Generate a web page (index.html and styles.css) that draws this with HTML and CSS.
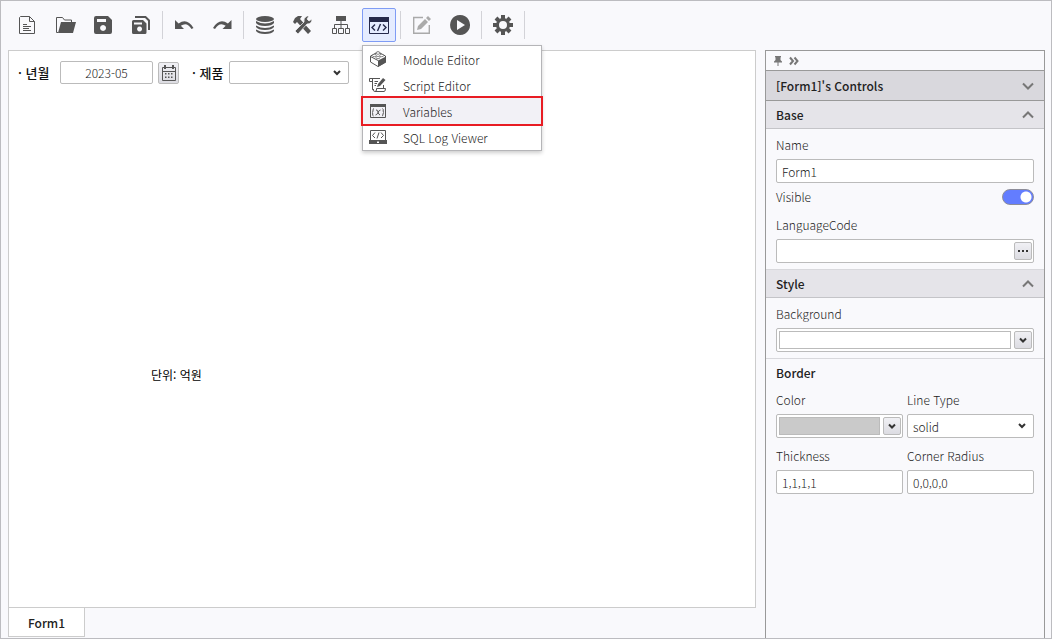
FILE: index.html
```html
<!DOCTYPE html>
<html lang="ko">
  <head>
    <meta charset="UTF-8" />
    <meta name="viewport" content="width=device-width, initial-scale=1.0" />
    <title>Form1</title>
    <link rel="stylesheet" href="styles.css">
  </head>
  <body>
    <div class="app">
      <header class="toolbar">
        <button class="tool" aria-label="New">
          <svg viewBox="0 0 20 20"><path class="line" d="M3.5 1.5H12.500L17.500 6.500V18.500H2.500V2.500Z"/><path class="line" d="M12.500 1.500V6.500H17.500"/><path class="line" d="M6 9.500H10M6 11.500H14M6 13.500H12M6 15.500H14"/></svg>
        </button>
        <button class="tool" aria-label="Open">
          <svg viewBox="0 0 20 20"><path class="line" d="M3 17.500H1.500V2.500H7.500L9.500 5H16.500V8"/><path d="M6 7H21L18 18H3Z"/></svg>
        </button>
        <button class="tool" aria-label="Save">
          <svg viewBox="0 0 20 20"><path fill-rule="evenodd" d="M3 1H15L19 5V17Q19 19 17 19H3Q1 19 1 17V3Q1 1 3 1ZM4 4V7H13V4ZM10 10a3 3 0 1 0 .1 0Z"/></svg>
        </button>
        <button class="tool" aria-label="Save all">
          <svg viewBox="0 0 20 20"><path fill-rule="evenodd" d="M2.500 5H12L15.500 8.500V17.500Q15.500 19 14 19H2.500Q1 19 1 17.500V6.500Q1 5 2.500 5ZM3 7.500V9.500H11V7.500ZM8.500 11.500a2.500 2.500 0 1 0 .1 0Z"/><path class="bold" d="M4 2H14.500L18 5.500V15"/></svg>
        </button>
        <span class="sep"></span>
        <button class="tool" aria-label="Undo">
          <svg viewBox="0 0 20 20"><path d="M1 5V14H10L6.800 10.800Q13 6.500 17.500 14L19.500 13Q13 2.500 4.600 8.600Z"/></svg>
        </button>
        <button class="tool" aria-label="Redo">
          <svg viewBox="0 0 20 20"><path d="M19.500 5V14H10.500L13.700 10.800Q7.500 6.500 3 14L1 13Q7.500 2.500 15.900 8.600Z"/></svg>
        </button>
        <span class="sep"></span>
        <button class="tool" aria-label="Data">
          <svg viewBox="0 0 20 20"><ellipse cx="10" cy="4" rx="9" ry="3"/><path d="M1 6Q10 11 19 6V8Q17 11 10 11T1 8ZM1 10.500Q10 15.500 19 10.500V12Q17 15 10 15T1 12ZM1 14.500Q10 19.500 19 14.500V16Q17 19 10 19T1 16Z"/></svg>
        </button>
        <button class="tool" aria-label="Tools">
          <svg viewBox="0 0 20 20"><path d="M0 7L2 3L5 1H9L7 4L18 16L15 19L4 7L2 9Z"/><path d="M2 16L11 7Q10 3 14 1H16L14 4L16 6L19 4Q19 9 14 9L5 19Z" stroke="#f9f9fc" stroke-width=".7"/></svg>
        </button>
        <button class="tool" aria-label="Structure">
          <svg viewBox="0 0 20 20"><path d="M5 1H15V6H5Z"/><path class="line" d="M10 6V13M3.500 13V9.500H16.500V13M1.500 13.500H5.500V18.500H1.500ZM7.500 13.500H12.500V18.500H7.500ZM14.500 13.500H18.500V18.500H14.500Z"/></svg>
        </button>
        <div class="dropdown">
          <button class="tool active" aria-label="Code" aria-expanded="true">
            <svg viewBox="0 0 20 20"><path class="line" d="M.5 2.500H19.500V18.500H.5Z"/><path d="M0 2H20V7H0Z"/><path class="mid" d="M6 9.500L3 12.500L6 15.500M14 9.500L17 12.500L14 15.500M11.500 9L8.500 16"/></svg>
          </button>
          <div class="menu">
            <button class="menu-item">
              <svg viewBox="0 0 18 18"><path class="line" d="M1.500 6L9 2L16.500 6V12L9 16.500L1.500 12ZM1.500 6.500L9 10.500"/><path d="M9 10.500L17 6.500V12.500L9 17Z"/><ellipse class="thin" cx="9" cy="3" rx="2" ry="1.300"/><ellipse class="thin" cx="5.300" cy="5.500" rx="2" ry="1.200"/><ellipse class="thin" cx="12.700" cy="5.500" rx="2" ry="1.200"/><ellipse class="thin" cx="9" cy="7.500" rx="2" ry="1.200"/></svg>
              Module Editor
            </button>
            <button class="menu-item">
              <svg viewBox="0 0 18 18"><path class="line" d="M3.500 5.500H.5V2.500H11M3.500 2.500V13.500H5M14.500 9V12M6 15.500H15Q16.500 15.500 16.500 12.500H7.500V14Q7 15.500 6 15.500Q4 15.500 4 13M5.500 5.500H9M5.500 7.500H8M5.500 9.500H7"/><path d="M8 11L9 8L14 2L16.500 4L11 10Z"/></svg>
              Script Editor
            </button>
            <button class="menu-item selected">
              <svg viewBox="0 0 18 18"><path class="line" d="M1.500 2.500H16.500V15.500H1.500Z"/><path d="M1 2H17V5H1Z"/><path class="line" d="M5 6.500Q3.500 7 4 9Q4 10 3 10.500Q4 11 3.700 12Q3.500 14 4.500 14M13.500 6.500Q14.500 7 14.200 9Q14 10 15 10.500Q14 11 14 12Q14 14 13 14M7 8Q8.500 7.500 9 10T11 13M11.500 8Q10 8 9 10.500T6.500 13"/></svg>
              Variables
            </button>
            <button class="menu-item">
              <svg viewBox="0 0 18 18"><path class="line" d="M1.500 13V2.500H16.500V13M6 4.500L3.500 7.500L6 10M12 4.500L14.500 7.500L12 10M10 4.500L8 10.500"/><path fill-rule="evenodd" d="M0 12H18V16H0ZM8 13.500V15H10V13.500Z"/></svg>
              SQL Log Viewer
            </button>
          </div>
        </div>
        <span class="sep"></span>
        <button class="tool disabled" aria-label="Edit" disabled>
          <svg viewBox="0 0 20 20"><path class="mid" d="M11 2.500H1.700V18.300H17.300V10"/><path d="M5 15L6 11L13 4L16 7L9 14ZM14 3L16 1L19 4L17 6Z"/></svg>
        </button>
        <button class="tool" aria-label="Run">
          <svg viewBox="0 0 20 20"><path fill-rule="evenodd" d="M10 0a10 10 0 1 0 .1 0ZM7 5L15 10L7 15Z"/></svg>
        </button>
        <span class="sep"></span>
        <button class="tool" aria-label="Settings">
          <svg viewBox="0 0 20 20"><circle class="ring" cx="10" cy="10" r="5.500"/><path class="teeth" d="M10 0V4M10 16V20M0 10H4M16 10H20M3 3L5.500 5.500M14.500 14.500L17 17M17 3L14.500 5.500M5.500 14.500L3 17"/></svg>
        </button>
        <span class="sep"></span>
      </header>

      <div class="workspace">
        <main class="editor">
          <div class="canvas">
            <div class="filters">
              <label for="month">· 년월</label>
              <input id="month" class="month" type="text" value="2023-05" />
              <button class="icon-btn calendar" aria-label="Calendar">
                <svg viewBox="0 0 16 16"><path class="line" d="M1.500 2.500H14.500V15.500H1.500ZM2 6.500H14"/><path d="M3 0H5V4H3ZM11 0H13V4H11ZM4 8H5.500V9.500H4ZM7 8H8.500V9.500H7ZM10 8H11.500V9.500H10ZM4 11.500H5.500V13H4ZM7 11.500H8.500V13H7ZM10 11.500H11.500V13H10Z"/></svg>
              </button>
              <label for="product">· 제품</label>
              <select id="product" class="product"><option></option></select>
            </div>
            <span class="unit">단위: 억원</span>
          </div>
          <nav class="tabs"><button class="tab">Form1</button></nav>
        </main>

        <aside class="panel">
          <div class="panel-bar">
            <button class="plain" aria-label="Pin">
              <svg viewBox="0 0 10 10"><path d="M2 0H8V1L7.500 1.500V4L9 5.500V6.500H5.500V10H4.500V6.500H1V5.500L2.500 4V1.500L2 1Z"/></svg>
            </button>
            <button class="plain" aria-label="Collapse">
              <svg viewBox="0 0 10 10"><path class="bold" d="M1 1.500L4 5L1 8.500M5.500 1.500L8.500 5L5.500 8.500"/></svg>
            </button>
          </div>
          <button class="section controls">[Form1]'s Controls
            <svg viewBox="0 0 12 8"><path class="bold" d="M1 1.500L6 6.500L11 1.500"/></svg>
          </button>
          <button class="section">Base
            <svg viewBox="0 0 12 8"><path class="bold" d="M1 6.500L6 1.500L11 6.500"/></svg>
          </button>
          <div class="group">
            <label for="name">Name</label>
            <input id="name" class="field" type="text" value="Form1" />
            <div class="row">
              <label for="visible">Visible</label>
              <input id="visible" class="toggle" type="checkbox" checked />
            </div>
            <label for="lang">LanguageCode</label>
            <div class="field combo">
              <input id="lang" type="text" />
              <button class="icon-btn" aria-label="More">
                <svg viewBox="0 0 12 12"><path d="M1 5H3V7H1ZM5 5H7V7H5ZM9 5H11V7H9Z"/></svg>
              </button>
            </div>
          </div>
          <button class="section style">Style
            <svg viewBox="0 0 12 8"><path class="bold" d="M1 6.500L6 1.500L11 6.500"/></svg>
          </button>
          <div class="group">
            <label for="background">Background</label>
            <div class="field combo">
              <span class="swatch"></span>
              <button id="background" class="icon-btn">
                <svg viewBox="0 0 12 12"><path class="bold" d="M3 4.500L6 7.500L9 4.500"/></svg>
              </button>
            </div>
          </div>
          <div class="group border-group">
            <h3>Border</h3>
            <div class="grid">
              <div>
                <label for="color">Color</label>
                <div class="field combo">
                  <span class="swatch gray"></span>
                  <button id="color" class="icon-btn">
                    <svg viewBox="0 0 12 12"><path class="bold" d="M3 4.500L6 7.500L9 4.500"/></svg>
                  </button>
                </div>
              </div>
              <div>
                <label for="lineType">Line Type</label>
                <select id="lineType" class="field"><option>solid</option></select>
              </div>
              <div>
                <label for="thickness">Thickness</label>
                <input id="thickness" class="field" type="text" value="1,1,1,1" />
              </div>
              <div>
                <label for="radius">Corner Radius</label>
                <input id="radius" class="field" type="text" value="0,0,0,0" />
              </div>
            </div>
          </div>
        </aside>
      </div>
    </div>
  </body>
</html>
```

FILE: styles.css
```css
* {
  box-sizing: border-box;
}
body {
  margin: 0;
  color: #222;
}
body,
button,
input,
select {
  font-family: "Noto Sans CJK KR", sans-serif;
  font-size: 12px;
  font-weight: 300;
}
button {
  padding: 0;
  border: 0;
  background: none;
  color: inherit;
}
svg {
  display: block;
  flex: none;
  fill: #555;
  stroke: none;
  overflow: visible;
}
.line,
.thin,
.mid,
.bold,
.ring,
.teeth {
  fill: none;
  stroke: #555;
  stroke-width: 1;
}
.thin {
  fill: #fff;
  stroke-width: 0.7;
}
.mid {
  stroke-width: 1.4;
}
.bold {
  stroke-width: 2;
}
.ring {
  stroke-width: 3;
}
.teeth {
  stroke-width: 4;
}
.app {
  display: flex;
  flex-direction: column;
  min-height: 100vh;
  border: 1px solid #bcbcc0;
  background: #f9f9fc;
}

/* toolbar */
.toolbar {
  display: flex;
  align-items: center;
  gap: 4px;
  height: 49px;
  padding: 0 9px 1px;
}
.tool {
  display: flex;
  align-items: center;
  justify-content: center;
  width: 34px;
  height: 34px;
  border-radius: 2px;
}
.tool svg {
  width: 20px;
  height: 20px;
}
.tool.active {
  border: 1px solid #7f9cf5;
  background: #e5ecff;
}
.tool.active svg {
  fill: #25294a;
}
.tool.active .line,
.tool.active .mid {
  stroke: #25294a;
}
.tool.active .line,
.tool.active .mid,
.tool.disabled .mid {
  fill: none;
}
.tool.disabled svg {
  fill: #aaa;
}
.tool.disabled .mid {
  stroke: #aaa;
}
.sep {
  width: 1px;
  height: 28px;
  background: #d3d3d8;
}

/* dropdown menu */
.dropdown {
  position: relative;
}
.menu {
  position: absolute;
  z-index: 10;
  top: 37px;
  left: 0;
  width: 180px;
  border: 1px solid #b5b5b8;
  background: #fff;
  box-shadow: 0 2px 4px rgba(0, 0, 0, 0.2);
}
.menu-item {
  display: flex;
  align-items: center;
  gap: 16px;
  width: 100%;
  height: 26px;
  padding-left: 6px;
}
.menu-item svg {
  width: 18px;
  height: 18px;
}
.menu-item.selected {
  outline: 2px solid #e81c23;
  background: #f2f1f6;
}

/* form editor */
.workspace {
  display: flex;
  flex: 1;
  gap: 9px;
  padding: 0 6px 0 7px;
}
.editor {
  display: flex;
  flex: 1;
  flex-direction: column;
  padding-bottom: 1px;
}
.canvas {
  position: relative;
  flex: 1;
  border: 1px solid #ccc;
  background: #fff;
}
.filters {
  display: flex;
  align-items: center;
  padding: 10px 9px;
}
.filters label {
  width: 42px;
  font-size: 13px;
  font-weight: 500;
  color: #111;
}
.filters .calendar {
  width: 21px;
  height: 22px;
  margin: 0 13px 0 5px;
}
.filters .calendar + label {
  width: 37px;
}
.calendar svg {
  width: 16px;
  height: 16px;
}
.month,
.product {
  height: 23px;
  border: 1px solid #bbb;
  border-radius: 2px;
  background-color: #fff;
  color: #222;
}
.month {
  width: 93px;
  text-align: center;
}
.product {
  width: 120px;
}
.unit {
  position: absolute;
  top: 315px;
  left: 142px;
  font-weight: 400;
  line-height: 18px;
  color: #000;
}
.tabs {
  display: flex;
}
.tab {
  width: 77px;
  height: 29px;
  border: 1px solid #ccc;
  border-top: 0;
  background: #fff;
  font-weight: 500;
}

/* property panel */
.panel {
  width: 280px;
  border: 1px solid #999;
  border-bottom: 0;
}
.panel-bar {
  display: flex;
  align-items: center;
  gap: 6px;
  height: 19px;
  padding-left: 7px;
}
.plain svg {
  width: 10px;
  height: 10px;
  fill: #777;
}
.plain .bold,
.section .bold {
  stroke: #777;
}
.section {
  display: flex;
  align-items: center;
  justify-content: space-between;
  width: 100%;
  height: 28px;
  padding: 0 10px;
  border-bottom: 1px solid #c4c4c8;
  background: #e5e4e9;
  font-weight: 500;
}
.section svg {
  width: 12px;
  height: 8px;
}
.section.controls {
  height: 31px;
  border-top: 1px solid #999;
  border-bottom: 1px solid #999;
  background: #d9d8dd;
}
.section.style {
  height: 29px;
  border-top: 1px solid #d8d8dc;
}
.group {
  padding: 2px 10px 6px;
}
.group label {
  display: block;
  line-height: 28px;
}
.row {
  display: flex;
  align-items: center;
  justify-content: space-between;
}
.field {
  display: block;
  width: 100%;
  height: 24px;
  padding: 0 5px;
  border: 1px solid #bbb;
  border-radius: 2px;
  background-color: #fff;
  color: #222;
}
select {
  appearance: none;
  background: url("data:image/svg+xml,%3Csvg xmlns='http://www.w3.org/2000/svg' width='8' height='6'%3E%3Cpath d='M1 1L4 4L7 1' fill='none' stroke='%23333' stroke-width='2'/%3E%3C/svg%3E") no-repeat right 7px center;
}
.combo {
  display: flex;
  align-items: center;
  gap: 3px;
  padding: 0 1px 0 2px;
}
.combo input {
  flex: 1;
  min-width: 0;
  border: 0;
}
.icon-btn {
  display: flex;
  align-items: center;
  justify-content: center;
  width: 18px;
  height: 18px;
  border: 1px solid #bbb;
  border-radius: 2px;
  background: linear-gradient(#f0f0f4, #dcdce2);
}
.combo svg {
  width: 12px;
  height: 12px;
  fill: #333;
}
.combo .bold {
  stroke: #333;
}
.swatch {
  flex: 1;
  height: 18px;
  border: 1px solid #bbb;
}
.swatch.gray {
  background: #cacaca;
}
.toggle {
  appearance: none;
  width: 32px;
  height: 16px;
  margin: 0;
  border: 1px solid #8d8d99;
  border-radius: 8px;
  background: radial-gradient(circle at 23px 7px, #fff 5px, #637dff 6px);
}
.border-group {
  padding-top: 0;
  border-top: 1px solid #d8d8dc;
}
.border-group h3 {
  margin: 0;
  font-size: 12px;
  font-weight: 500;
  line-height: 27px;
}
.grid {
  display: grid;
  grid-template-columns: 1fr 1fr;
  gap: 4px;
}
```
